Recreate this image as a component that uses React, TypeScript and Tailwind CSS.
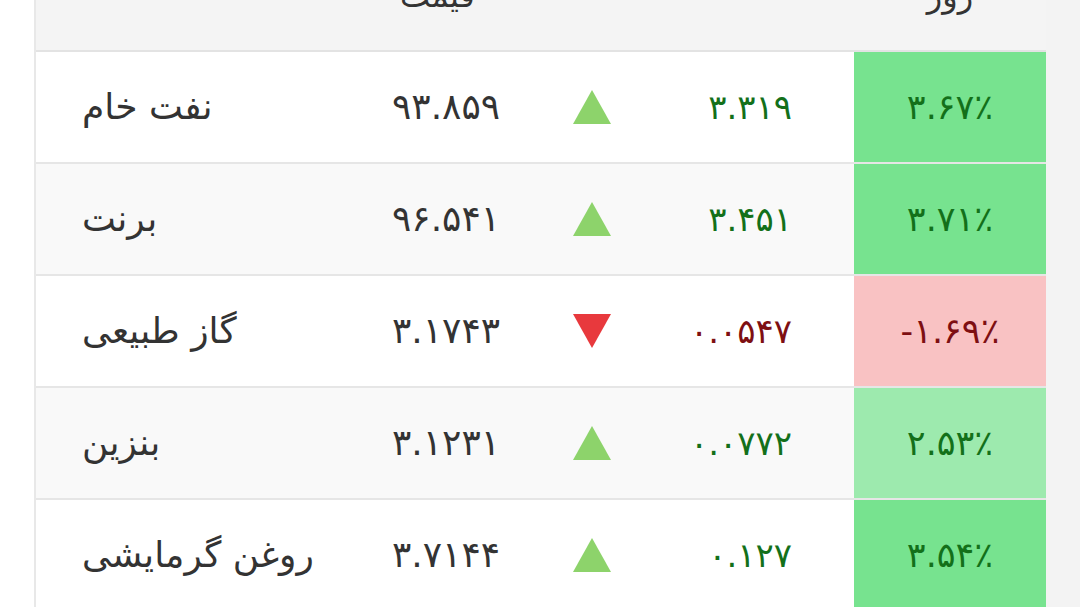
const rows = [
  { name: "نفت خام", price: "۹۳.۸۵۹", change: "۳.۳۱۹", pct: "۳.۶۷٪", up: true, cell: "bg-[#77e38f]" },
  { name: "برنت", price: "۹۶.۵۴۱", change: "۳.۴۵۱", pct: "۳.۷۱٪", up: true, cell: "bg-[#77e38f]" },
  { name: "گاز طبیعی", price: "۳.۱۷۴۳", change: "۰.۰۵۴۷", pct: "-۱.۶۹٪", up: false, cell: "bg-[#f9c2c3]" },
  { name: "بنزین", price: "۳.۱۲۳۱", change: "۰.۰۷۷۲", pct: "۲.۵۳٪", up: true, cell: "bg-[#9deaae]" },
  { name: "روغن گرمایشی", price: "۳.۷۱۴۴", change: "۰.۱۲۷", pct: "۳.۵۴٪", up: true, cell: "bg-[#77e38f]" },
]

function Arrow({ up }: { up: boolean }) {
  return (
    <svg width="40" height="36" viewBox="0 0 40 36">
      {up ? (
        <polygon points="20,1 39,35 1,35" fill="#8dd36b" />
      ) : (
        <polygon points="1,1 39,1 20,35" fill="#e8393d" />
      )}
    </svg>
  )
}

export default function App() {
  const cols = "grid grid-cols-[326px_180px_100px_212px_1fr]"
  return (
    <div className="flex h-[607px] w-[1080px] overflow-hidden bg-white font-['DejaVu_Sans',sans-serif]">
      <div className="w-[34px] shrink-0 bg-white" />
      <div className="w-[1012px] shrink-0 border-l-2 border-[#e8e8e8]">
        <div className={`${cols} h-[52px] overflow-hidden border-b-2 border-[#e3e3e3] bg-[#f4f4f4] text-[32px] text-[#333]`}>
          <div />
          <div className="-mt-[28px] pl-[38px]" dir="rtl">
            <span className="block text-left">قیمت</span>
          </div>
          <div />
          <div />
          <div className="-mt-[28px] text-center" dir="rtl">روز</div>
        </div>
        {rows.map((r, i) => (
          <div
            key={r.name}
            className={`${cols} h-[112px] border-b-2 border-[#e6e6e6] ${i % 2 === 1 ? "bg-[#f9f9f9]" : "bg-white"}`}
          >
            <div className="flex items-center pl-[46px] text-[36px] text-[#333]">
              <span dir="rtl">{r.name}</span>
            </div>
            <div className="flex items-center pl-[30px] text-[36px] text-[#333]">
              <span dir="ltr">{r.price}</span>
            </div>
            <div className="flex items-center justify-center">
              <Arrow up={r.up} />
            </div>
            <div
              className={`flex items-center justify-end pr-[62px] text-[34px] ${r.up ? "text-[#13701a]" : "text-[#7e0f12]"}`}
            >
              <span dir="ltr">{r.change}</span>
            </div>
            <div
              className={`flex items-center justify-center text-[35px] ${r.cell} ${r.up ? "text-[#13701a]" : "text-[#7e0f12]"}`}
            >
              <span dir="ltr">{r.pct}</span>
            </div>
          </div>
        ))}
      </div>
      <div className="flex-1 bg-[#f3f3f3]" />
    </div>
  )
}
